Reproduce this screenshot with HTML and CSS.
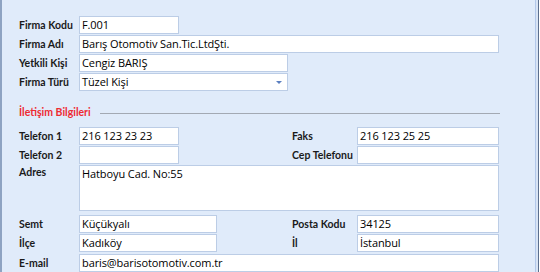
FILE: index.html
```html
<!DOCTYPE html>
<html lang="tr">
<head>
  <meta charset="UTF-8" />
  <title>Firma Kartı</title>
  <link rel="stylesheet" href="styles.css">
</head>
<body>
  <div class="window">
    <div class="form">
      <div class="grid top">
        <label>Firma Kodu</label><div class="field w100">F.001</div>
        <label>Firma Adı</label><div class="field full">Barış Otomotiv San.Tic.LtdŞti.</div>
        <label>Yetkili Kişi</label><div class="field w209">Cengiz BARIŞ</div>
        <label>Firma Türü</label><div class="field w209 combo">Tüzel Kişi<span class="arrow"></span></div>
      </div>

      <div class="section"><span>İletişim Bilgileri</span><i></i></div>

      <div class="grid contact">
        <label>Telefon 1</label><div class="field w100">216 123 23 23</div>
        <label>Faks</label><div class="field">216 123 25 25</div>
        <label>Telefon 2</label><div class="field w100"></div>
        <label>Cep Telefonu</label><div class="field"></div>
        <label class="top-label">Adres</label><div class="field full area">Hatboyu Cad. No:55</div>
        <label>Semt</label><div class="field w138">Küçükyalı</div>
        <label>Posta Kodu</label><div class="field">34125</div>
        <label>İlçe</label><div class="field w138">Kadıköy</div>
        <label>İl</label><div class="field">İstanbul</div>
        <label class="gap">E-mail</label><div class="field full gap">baris@barisotomotiv.com.tr</div>
        <label></label><div class="field full"></div>
      </div>
    </div>
  </div>
</body>
</html>
```

FILE: styles.css
```css
:root {
  --bg: #e0ebfa;
  --edge: #8ea3c2;
  --box: #bccde6;
  --red: #ee2a32;
}
* { margin: 0; padding: 0; box-sizing: border-box; }
body { width: 540px; height: 272px; overflow: hidden; background: var(--bg); font-family: "Open Sans", "Noto Sans", sans-serif; color: #000; }
.window { height: 272px; overflow: hidden; border-left: 2px solid var(--edge); border-right: 1px solid #fff; box-shadow: inset -1px 0 0 #5b6f8e, inset -3px 0 0 #d8e4f5, inset -4px 0 0 #b3c8ea; }
.form { padding: 16px 0 0 17px; }
.grid { display: grid; grid-template-columns: 60px 213px 65px 142px; row-gap: 1px; align-items: center; }
.grid label { font-family: Lato, "Open Sans", sans-serif; font-size: 10.5px; font-weight: bold; color: #1a1a1a; white-space: nowrap; }
.field { height: 18px; background: #fff; border: 1px solid var(--box); font-size: 11px; line-height: 16px; padding-left: 2px; white-space: nowrap; position: relative; letter-spacing: -0.1px; }
.top .field { grid-column: 2 / 5; justify-self: start; }
.w100 { width: 100px; }
.w138 { width: 138px; justify-self: start; }
.w209 { width: 209px; }
.full { grid-column: 2 / 5; width: 420px; }
.combo .arrow { position: absolute; right: 5px; top: 7px; border: 3px solid transparent; border-top: 3px solid #5b7fc0; border-bottom: 0; }
.section { display: flex; align-items: center; width: 481px; height: 36px; padding-top: 5px; }
.section span { font-family: Lato, "Open Sans", sans-serif; color: var(--red); font-size: 10.5px; font-weight: bold; }
.section i { margin: 3px 0 0 9px; flex: 1; border-top: 1px solid #a3a9b3; }
.contact .area { height: 46px; align-self: start; margin-bottom: 3px; }
.contact .top-label { align-self: start; padding-top: 1px; }
.contact .gap { margin-top: 1px; }
```
